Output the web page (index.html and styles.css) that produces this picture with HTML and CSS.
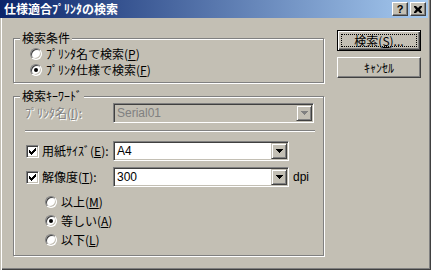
FILE: index.html
```html
<!DOCTYPE html>
<html lang="ja">

<head>
    <meta charset="UTF-8">
    <title>仕様適合ﾌﾟﾘﾝﾀの検索</title>
    <link rel="stylesheet" href="styles.css">
</head>

<body>
    <div class="window">
        <div class="titlebar">
            <div class="title">仕様適合ﾌﾟﾘﾝﾀの検索</div>
            <div class="title-buttons">
                <span class="tbtn help">?</span>
                <span class="tbtn close">
                    <svg width="8" height="7" viewBox="0 0 8 7">
                        <path d="M0 0h2l2 2 2-2h2v1l-2 2.5 2 2.5v1h-2l-2-2-2 2h-2v-1l2-2.5-2-2.5z" fill="#000" />
                    </svg>
                </span>
            </div>
        </div>

        <div class="client">
            <div class="groups">
                <!-- 検索条件 -->
                <fieldset class="group group-cond">
                    <legend>検索条件</legend>
                    <div class="cond-body">
                        <div class="opt"><span class="radio"></span>ﾌﾟﾘﾝﾀ名で検索(<u>P</u>)</div>
                        <div class="opt"><span class="radio on"></span>ﾌﾟﾘﾝﾀ仕様で検索(<u>F</u>)</div>
                    </div>
                </fieldset>

                <!-- 検索キーワード -->
                <fieldset class="group group-key">
                    <legend>検索ｷｰﾜｰﾄﾞ</legend>
                    <div class="key-body">
                        <div class="field">
                            <span class="lab disabled">ﾌﾟﾘﾝﾀ名(<u>I</u>):</span>
                            <div class="combo combo-wide is-disabled">
                                <span class="combo-text">Serial01</span>
                                <span class="drop"><svg width="7" height="4" viewBox="0 0 7 4"><path d="M0 0h7v1h-1v1h-1v1h-1v1h-1v-1h-1v-1h-1v-1h-1z" /></svg></span>
                            </div>
                        </div>

                        <div class="sep"></div>

                        <div class="field field-paper">
                            <span class="lab"><span class="check"><svg width="11" height="11" viewBox="1 1 11 11"><path d="M3 5h1v1h1v1h1v-1h1v-1h1v-1h1v-1h1v3h-1v1h-1v1h-1v1h-1v1h-1v-1h-1v-1h-1z" /></svg></span>用紙ｻｲｽﾞ(<u>E</u>):</span>
                            <div class="combo combo-narrow">
                                <span class="combo-text">A4</span>
                                <span class="drop"><svg width="7" height="4" viewBox="0 0 7 4"><path d="M0 0h7v1h-1v1h-1v1h-1v1h-1v-1h-1v-1h-1v-1h-1z" /></svg></span>
                            </div>
                        </div>

                        <div class="field field-res">
                            <span class="lab"><span class="check"><svg width="11" height="11" viewBox="1 1 11 11"><path d="M3 5h1v1h1v1h1v-1h1v-1h1v-1h1v-1h1v3h-1v1h-1v1h-1v1h-1v1h-1v-1h-1v-1h-1z" /></svg></span>解像度(<u>T</u>):</span>
                            <div class="combo combo-narrow">
                                <span class="combo-text">300</span>
                                <span class="drop"><svg width="7" height="4" viewBox="0 0 7 4"><path d="M0 0h7v1h-1v1h-1v1h-1v1h-1v-1h-1v-1h-1v-1h-1z" /></svg></span>
                            </div>
                            <span class="unit">dpi</span>
                        </div>

                        <div class="sub-opts">
                            <div class="opt sub-opt"><span class="radio"></span>以上(<u>M</u>)</div>
                            <div class="opt sub-opt"><span class="radio on"></span>等しい(<u>A</u>)</div>
                            <div class="opt sub-opt"><span class="radio"></span>以下(<u>L</u>)</div>
                        </div>
                    </div>
                </fieldset>
            </div>

            <div class="buttons">
                <button class="btn btn-default"><span class="focus">検索(<u>S</u>)...</span></button>
                <button class="btn">ｷｬﾝｾﾙ</button>
            </div>
        </div>
    </div>
</body>

</html>
```

FILE: styles.css
```css
body {
    margin: 0;
    background-color: #c3bfb4;
    font-family: "Noto Sans CJK JP", "Liberation Sans", sans-serif;
    font-size: 12px;
    color: #000;
}

.window {
    width: 431px;
    height: 270px;
    box-sizing: border-box;
    background-color: #c3bfb4;
    /* 左の白線と右下の暗い枠 */
    box-shadow: inset 1px 0 #c3bfb4, inset 2px 0 #fff, inset -1px -1px #404040, inset -2px -2px #808080;
    overflow: hidden;
}

/* タイトルバー */
.titlebar {
    height: 18px;
    margin-right: 3px;
    padding: 0 2px 0 4px;
    display: flex;
    align-items: center;
    justify-content: space-between;
    background: linear-gradient(to right, #0a246a, #a6caf0);
}

.title {
    color: #fff;
    font-weight: bold;
    line-height: 18px;
}

.title-buttons {
    display: flex;
    gap: 2px;
}

.tbtn {
    width: 16px;
    height: 14px;
    box-sizing: border-box;
    display: flex;
    align-items: center;
    justify-content: center;
    background-color: #c3bfb4;
    border: 1px solid;
    border-color: #fff #404040 #404040 #fff;
    box-shadow: inset -1px -1px #808080;
}

.help {
    font-family: "Liberation Sans", sans-serif;
    font-weight: bold;
    font-size: 11px;
    line-height: 12px;
}

/* 本体 */
.client {
    display: flex;
    gap: 13px;
    padding: 12px 0 0 13px;
}

.groups {
    width: 311px;
}

.group {
    width: 311px;
    min-inline-size: 0;
    box-sizing: border-box;
    margin: 0;
    padding: 0;
    border: 1px solid #808080;
    /* エッチング風の白線 */
    box-shadow: inset 1px 1px #fff, 1px 1px #fff;
}

.group legend {
    margin-left: 6px;
    padding: 0 2px;
    line-height: 14px;
    background-color: #c3bfb4;
}

.group-cond {
    margin-top: 1px;
}

.cond-body {
    padding: 1px 0 4px 16px;
}

.group-key {
    margin-top: 6px;
}

.key-body {
    padding: 0 0 6px 11px;
}

.opt {
    display: flex;
    align-items: center;
    height: 16px;
    line-height: 14px;
}

.radio {
    width: 12px;
    height: 12px;
    box-sizing: border-box;
    margin-right: 4px;
    display: flex;
    align-items: center;
    justify-content: center;
    border-radius: 50%;
    background-color: #fff;
    border: 1px solid;
    border-color: #808080 #fff #fff #808080;
    box-shadow: inset 1px 1px #404040, inset -1px -1px #c3bfb4;
}

.radio.on::after {
    content: "";
    width: 4px;
    height: 4px;
    border-radius: 50%;
    background-color: #000;
}

.field {
    display: flex;
    align-items: center;
    height: 20px;
}

.field-paper {
    margin-top: 9px;
}

.field-res {
    margin-top: 6px;
}

.lab {
    width: 88px;
    display: flex;
    align-items: center;
    line-height: 14px;
}

.disabled {
    color: #808080;
    text-shadow: 1px 1px #fff;
}

.check {
    width: 13px;
    height: 13px;
    box-sizing: border-box;
    margin: 0 3px 0 1px;
    display: flex;
    background-color: #fff;
    border: 1px solid;
    border-color: #808080 #fff #fff #808080;
    box-shadow: inset 1px 1px #404040, inset -1px -1px #c3bfb4;
}

.sep {
    width: 290px;
    margin-top: 7px;
    border-top: 1px solid #808080;
    border-bottom: 1px solid #fff;
}

/* コンボボックス */
.combo {
    height: 20px;
    box-sizing: border-box;
    padding: 1px;
    display: flex;
    background-color: #fff;
    border: 1px solid;
    border-color: #808080 #fff #fff #808080;
    box-shadow: inset 1px 1px #404040, inset -1px -1px #c3bfb4;
}

.combo-wide {
    width: 201px;
}

.combo-narrow {
    width: 176px;
}

.combo-text {
    flex: 1;
    padding-left: 2px;
    font-family: "Liberation Sans", sans-serif;
    font-size: 12px;
    line-height: 16px;
}

.drop {
    width: 16px;
    height: 16px;
    box-sizing: border-box;
    display: flex;
    align-items: center;
    justify-content: center;
    background-color: #c3bfb4;
    border: 1px solid;
    border-color: #c3bfb4 #404040 #404040 #c3bfb4;
    box-shadow: inset 1px 1px #fff, inset -1px -1px #808080;
}

.drop svg {
    fill: #000;
}

.is-disabled {
    background-color: #c3bfb4;
}

.is-disabled .combo-text {
    color: #808080;
}

.is-disabled .drop svg {
    fill: #808080;
}

.unit {
    margin-left: 4px;
    font-family: "Liberation Sans", sans-serif;
}

.sub-opts {
    margin-top: 5px;
}

.sub-opt {
    height: 19px;
    margin-left: 20px;
}

/* ボタン */
.buttons {
    display: flex;
    flex-direction: column;
    gap: 6px;
}

.btn {
    width: 84px;
    height: 21px;
    box-sizing: border-box;
    margin: 0;
    padding: 0;
    display: flex;
    align-items: center;
    justify-content: center;
    font: inherit;
    line-height: 14px;
    color: #000;
    background-color: #c3bfb4;
    border: 1px solid;
    border-color: #fff #404040 #404040 #fff;
    box-shadow: inset -1px -1px #808080;
}

.btn-default {
    padding: 3px;
    border-color: #000;
    box-shadow: inset 1px 1px #fff, inset -1px -1px #404040, inset -2px -2px #808080;
}

.focus {
    flex: 1;
    align-self: stretch;
    display: flex;
    align-items: center;
    justify-content: center;
    border: 1px dotted #000;
}
```
